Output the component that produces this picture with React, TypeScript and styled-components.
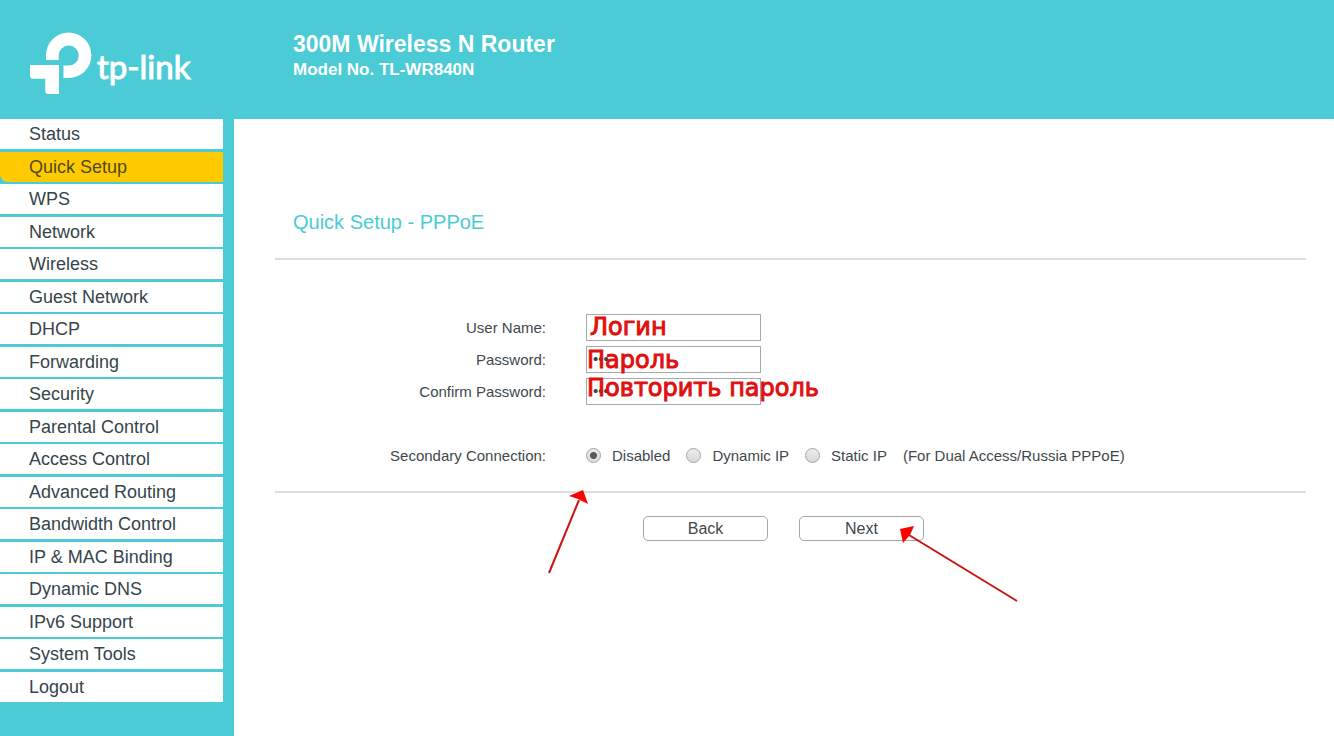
import React from "react";
import styled, { createGlobalStyle } from "styled-components";

const GlobalStyle = createGlobalStyle`
  *, *::before, *::after { box-sizing: border-box; }
  body {
    margin: 0;
    background: #fff;
    color: #40484e;
    font-family: "Liberation Sans", Arial, sans-serif;
    font-size: 15px;
  }
`;

const Page = styled.div`
  min-height: 100vh;
  display: flex;
  flex-direction: column;
`;

const Header = styled.header`
  display: flex;
  height: 119px;
  background: #4bcbd6;
  color: #fff;
`;

const LogoLink = styled.a`
  flex: 0 0 293px;
  padding: 28px 0 0 26px;
`;

const Product = styled.div`
  padding-top: 30px;
`;

const ProductName = styled.h1`
  margin: 0;
  font-size: 23px;
  line-height: 28px;
`;

const ProductModel = styled.p`
  margin: 0;
  font-size: 17px;
  font-weight: bold;
  line-height: 24px;
`;

const Body = styled.div`
  flex: 1;
  display: flex;
`;

const Sidebar = styled.nav`
  flex: 0 0 234px;
  padding-right: 11px;
  background: #4bcbd6;
`;

const MenuList = styled.ul`
  margin: 0;
  padding: 0;
  list-style: none;
`;

const MenuItem = styled.li`
  margin-bottom: 2px;
  &:nth-child(odd) { margin-bottom: 3px; }
`;

const MenuLink = styled.a<{ $active: boolean }>`
  display: block;
  height: 30px;
  padding-left: 29px;
  font-size: 18px;
  line-height: 30px;
  text-decoration: none;
  color: ${(p) => (p.$active ? "#4f4a1d" : "#36444b")};
  background: ${(p) => (p.$active ? "#ffcb00" : "#fff")};
  border-bottom-left-radius: ${(p) => (p.$active ? "8px" : "0")};
`;

const Content = styled.main`
  position: relative;
  flex: 1;
  padding: 88px 28px 40px 41px;
`;

const Title = styled.h2`
  margin: 0;
  padding: 0 0 21px 18px;
  font-size: 20px;
  font-weight: normal;
  line-height: 30px;
  color: #4bcbd6;
`;

const Fields = styled.div`
  padding: 54px 0 22px;
  border-top: 2px solid #ddd;
  border-bottom: 2px solid #ddd;
`;

const Row = styled.div`
  display: grid;
  grid-template-columns: 271px 1fr;
  column-gap: 40px;
  align-items: center;
  margin-bottom: 5px;
`;

const RadioRow = styled(Row)`
  margin: 37px 0 0;
  line-height: 27px;
`;

const Label = styled.label`
  text-align: right;
`;

const InputWrap = styled.div`
  position: relative;
  height: 27px;
`;

const TextInput = styled.input`
  display: block;
  width: 175px;
  height: 27px;
  padding: 0 0 3px 6px;
  border: 1px solid #a9a9a9;
  background: #fff;
  color: #36444b;
  font: 15px "Liberation Sans", Arial, sans-serif;
`;

const Note = styled.span<{ $left: number; $top: number }>`
  position: absolute;
  left: ${(p) => p.$left}px;
  top: ${(p) => p.$top}px;
  font-family: "DejaVu Sans", Verdana, sans-serif;
  font-size: 24px;
  line-height: 28px;
  white-space: nowrap;
  color: #e01010;
  -webkit-text-stroke: 1px #e01010;
  pointer-events: none;
`;

const Options = styled.div`
  display: flex;
  align-items: center;
  gap: 16px;
`;

const Option = styled.label`
  display: flex;
  align-items: center;
  gap: 11px;
`;

const Radio = styled.input`
  appearance: none;
  width: 15px;
  height: 15px;
  margin: 0;
  border: 1px solid #a3a3a3;
  border-radius: 50%;
  background: linear-gradient(#ececec, #d8d8d8);
  &:checked {
    background: radial-gradient(circle, #5a5a5a 3px, transparent 4px), linear-gradient(#ececec, #dcdcdc);
  }
`;

const Actions = styled.div`
  display: flex;
  gap: 31px;
  padding: 23px 0 0 368px;
`;

const Button = styled.button`
  width: 125px;
  height: 25px;
  padding: 0;
  border: 1px solid #a6a6a6;
  border-radius: 5px;
  background: #fff;
  color: #40484e;
  font: 16px/23px "Liberation Sans", Arial, sans-serif;
`;

const Arrow = styled.svg<{ $left: number; $top: number }>`
  position: absolute;
  left: ${(p) => p.$left}px;
  top: ${(p) => p.$top}px;
  pointer-events: none;
`;

const menu = [
  "Status", "Quick Setup", "WPS", "Network", "Wireless", "Guest Network",
  "DHCP", "Forwarding", "Security", "Parental Control", "Access Control",
  "Advanced Routing", "Bandwidth Control", "IP & MAC Binding", "Dynamic DNS",
  "IPv6 Support", "System Tools", "Logout",
];

const fields = [
  { id: "user", label: "User Name:", type: "text", value: "", note: "Логин", left: 4, top: -1 },
  { id: "password", label: "Password:", type: "password", value: "abc", note: "Пароль", left: 1, top: 0 },
  { id: "confirm", label: "Confirm Password:", type: "password", value: "abc", note: "Повторить пароль", left: 1, top: -4 },
];

const connections = ["Disabled", "Dynamic IP", "Static IP"];

function Logo() {
  return (
    <svg width="170" height="70" viewBox="26 28 170 70" fill="#fff" role="img" aria-label="tp-link">
      <path d="M46 60V55.500A22.700 22.700 0 1 1 68.500 78H63.500V65.500H68.500A10 10 0 1 0 58.700 55.500V60Z" />
      <path d="M30 65H59V94H48Q45.300 94 45.300 91V78.700H33Q30 78.700 30 75.500Z" />
      <text x="97" y="79" fontFamily="Lato, sans-serif" fontSize="33" stroke="#fff" strokeWidth="1">tp-link</text>
    </svg>
  );
}

export default function App() {
  return (
    <Page>
      <GlobalStyle />
      <Header>
        <LogoLink href="#home"><Logo /></LogoLink>
        <Product>
          <ProductName>300M Wireless N Router</ProductName>
          <ProductModel>Model No. TL-WR840N</ProductModel>
        </Product>
      </Header>
      <Body>
        <Sidebar>
          <MenuList>
            {menu.map((name) => (
              <MenuItem key={name}>
                <MenuLink href="#menu" $active={name === "Quick Setup"}>{name}</MenuLink>
              </MenuItem>
            ))}
          </MenuList>
        </Sidebar>
        <Content>
          <Title>Quick Setup - PPPoE</Title>
          <form onSubmit={(e) => e.preventDefault()}>
            <Fields>
              {fields.map((f) => (
                <Row key={f.id}>
                  <Label htmlFor={f.id}>{f.label}</Label>
                  <InputWrap>
                    <TextInput id={f.id} type={f.type} defaultValue={f.value} />
                    <Note $left={f.left} $top={f.top}>{f.note}</Note>
                  </InputWrap>
                </Row>
              ))}
              <RadioRow role="radiogroup" aria-labelledby="secondary">
                <Label as="span" id="secondary">Secondary Connection:</Label>
                <Options>
                  {connections.map((name) => (
                    <Option key={name}>
                      <Radio type="radio" name="connection" defaultChecked={name === "Disabled"} />
                      {name}
                    </Option>
                  ))}
                  <span>(For Dual Access/Russia PPPoE)</span>
                </Options>
              </RadioRow>
            </Fields>
            <Actions>
              <Button type="button">Back</Button>
              <Button type="submit">Next</Button>
            </Actions>
          </form>
          <Arrow $left={310} $top={368} width="50" height="90" viewBox="544 487 50 90" aria-hidden="true">
            <path d="M549 573L579 500" stroke="#cc1212" strokeWidth="2" />
            <path d="M569 496L583 490L588 504L578 499Z" fill="#f00" />
          </Arrow>
          <Arrow $left={661} $top={402} width="130" height="90" viewBox="895 521 130 90" aria-hidden="true">
            <path d="M1017 601L909 535" stroke="#cc1212" strokeWidth="2" />
            <path d="M900 529L914 526L910 535L903 543Z" fill="#f00" />
          </Arrow>
        </Content>
      </Body>
    </Page>
  );
}
